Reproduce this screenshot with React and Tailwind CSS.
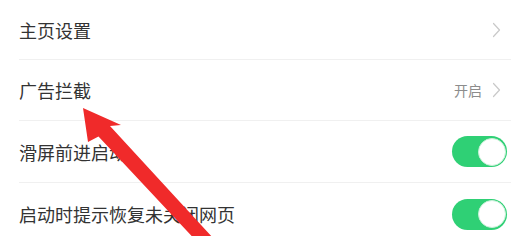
import React from "react";

function Chevron() {
  return (
    <svg width="9" height="16" viewBox="0 0 9 16" className="block">
      <path d="M1.5 1.5 L7.5 8 L1.5 14.5" fill="none" stroke="#c9c9c9" strokeWidth="1.2" strokeLinecap="round" strokeLinejoin="round" />
    </svg>
  );
}

function Toggle() {
  return (
    <div className="w-[55px] h-[31px] rounded-full bg-[#2fd075] flex items-center justify-end p-[1.5px]">
      <div className="w-[28px] h-[28px] rounded-full bg-white border border-[#c9f0d8]" />
    </div>
  );
}

export default function App() {
  const font = { fontFamily: '"Noto Sans CJK SC", "Noto Sans", sans-serif' };
  return (
    <div className="relative w-[526px] h-[236px] bg-white overflow-hidden" style={font}>
      <div className="flex flex-col pl-[19px] pr-[15px]">
        <div className="h-[60px] flex items-center justify-between border-b border-[#f0f0f0]">
          <span className="text-[18px] leading-none text-[#333333]">主页设置</span>
          <div className="mr-[10px]"><Chevron /></div>
        </div>
        <div className="h-[61px] flex items-center justify-between border-b border-[#f0f0f0]">
          <span className="text-[18px] leading-none text-[#333333]">广告拦截</span>
          <div className="flex items-center gap-[10px] mr-[10px]">
            <span className="text-[14px] leading-none text-[#8c8c8c]">开启</span>
            <Chevron />
          </div>
        </div>
        <div className="h-[62px] flex items-center justify-between border-b border-[#f0f0f0]">
          <span className="text-[18px] leading-none text-[#333333]">滑屏前进启动</span>
          <div className="mr-[4px]"><Toggle /></div>
        </div>
        <div className="h-[62px] flex items-center justify-between">
          <span className="text-[18px] leading-none text-[#333333]">启动时提示恢复未关闭网页</span>
          <div className="mr-[4px]"><Toggle /></div>
        </div>
      </div>
      <svg className="absolute inset-0 pointer-events-none" width="526" height="236" viewBox="0 0 526 236">
        <polygon
          points="83,108 121,125 110,126 225,251 215,261 98.5,136.4 88,142"
          fill="#f02a2a"
        />
      </svg>
    </div>
  );
}
